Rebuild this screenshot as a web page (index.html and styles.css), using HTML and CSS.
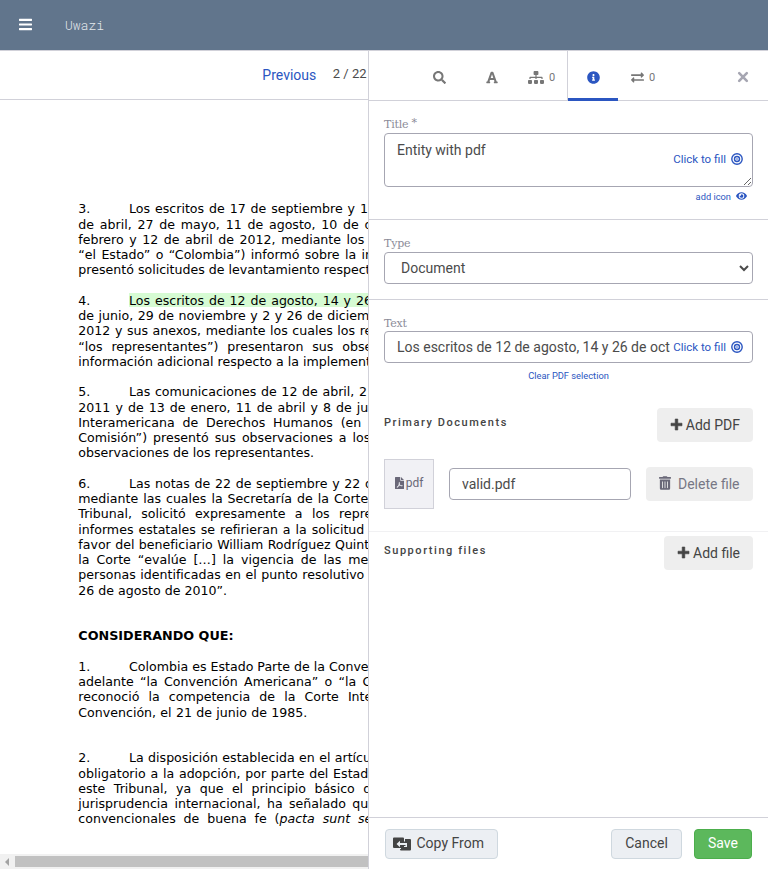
FILE: index.html
```
<!DOCTYPE html>
<html lang="es">
<head>
<meta charset="utf-8">
<title>Uwazi</title>
<link rel="stylesheet" href="styles.css">
</head>
<body>
<header class="topbar">
  <svg class="menu-icon" viewBox="0 0 448 512"><path d="M16 132h416c9 0 16-7 16-16V76c0-9-7-16-16-16H16C7 60 0 67 0 76v40c0 9 7 16 16 16zm0 160h416c9 0 16-7 16-16v-40c0-9-7-16-16-16H16c-9 0-16 7-16 16v40c0 9 7 16 16 16zm0 160h416c9 0 16-7 16-16v-40c0-9-7-16-16-16H16c-9 0-16 7-16 16v40c0 9 7 16 16 16z"/></svg>
  <span class="brand">Uwazi</span>
</header>
<div class="workspace">
  <main class="viewer">
    <div class="pager"><a class="previous">Previous</a><span class="count">2 / 22</span></div>
    <article class="page">
      <p><span class="num">3.</span><span class="fit" style="width:239px">Los escritos de 17 de septiembre y 1</span></p>
      <p><span class="fit" style="width:294px">de abril, 27 de mayo, 11 de agosto, 10 de o</span></p>
      <p><span class="fit" style="width:286px">febrero y 12 de abril de 2012, mediante los</span></p>
      <p><span class="fit" style="width:299px">“el Estado” o “Colombia”) informó sobre la im</span></p>
      <p><span class="fit" style="width:289px">presentó solicitudes de levantamiento respect</span></p>
      <p></p>
      <p><span class="num">4.</span><span class="fit marked" style="width:243px">Los escritos de 12 de agosto, 14 y 26</span></p>
      <p><span class="fit" style="width:291px">de junio, 29 de noviembre y 2 y 26 de diciem</span></p>
      <p><span class="fit" style="width:294px">2012 y sus anexos, mediante los cuales los re</span></p>
      <p><span class="fit" style="width:294px">“los representantes”) presentaron sus obse</span></p>
      <p><span class="fit" style="width:290px">información adicional respecto a la implement</span></p>
      <p></p>
      <p><span class="num">5.</span><span class="fit" style="width:238px">Las comunicaciones de 12 de abril, 2</span></p>
      <p><span class="fit" style="width:290px">2011 y de 13 de enero, 11 de abril y 8 de ju</span></p>
      <p><span class="fit" style="width:283px">Interamericana de Derechos Humanos (en</span></p>
      <p><span class="fit" style="width:292px">Comisión”) presentó sus observaciones a los</span></p>
      <p><span class="fit" style="width:234px">observaciones de los representantes.</span></p>
      <p></p>
      <p><span class="num">6.</span><span class="fit" style="width:244px">Las notas de 22 de septiembre y 22 d</span></p>
      <p><span class="fit" style="width:290px">mediante las cuales la Secretaría de la Corte</span></p>
      <p><span class="fit" style="width:294px">Tribunal, solicitó expresamente a los repre</span></p>
      <p><span class="fit" style="width:286px">informes estatales se refirieran a la solicitud</span></p>
      <p><span class="fit" style="width:291px">favor del beneficiario William Rodríguez Quint</span></p>
      <p><span class="fit" style="width:290px">la Corte “evalúe […] la vigencia de las me</span></p>
      <p><span class="fit" style="width:286px">personas identificadas en el punto resolutivo</span></p>
      <p><span class="fit" style="width:148px">26 de agosto de 2010”.</span></p>
      <p></p>
      <p></p>
      <p><b>CONSIDERANDO QUE:</b></p>
      <p></p>
      <p><span class="num">1.</span><span class="fit" style="width:239px">Colombia es Estado Parte de la Conve</span></p>
      <p><span class="fit" style="width:293px">adelante “la Convención Americana” o “la C</span></p>
      <p><span class="fit" style="width:294px">reconoció la competencia de la Corte Inte</span></p>
      <p><span class="fit" style="width:229px">Convención, el 21 de junio de 1985.</span></p>
      <p></p>
      <p></p>
      <p><span class="num">2.</span><span class="fit" style="width:242px">La disposición establecida en el artícu</span></p>
      <p><span class="fit" style="width:290px">obligatorio a la adopción, por parte del Estad</span></p>
      <p><span class="fit" style="width:293px">este Tribunal, ya que el principio básico d</span></p>
      <p><span class="fit" style="width:290px">jurisprudencia internacional, ha señalado qu</span></p>
      <p><span class="fit" style="width:294px">convencionales de buena fe (<i>pacta sunt se</i></span></p>
    </article>
    <div class="scrollbar"><span class="arrow"></span><span class="thumb"></span></div>
  </main>
  <aside class="panel">
    <nav class="tabs">
      <a class="tab t-search"><svg width="13" height="13" viewBox="0 0 512 512"><path d="M505 442.700 405.300 343c-4.500-4.500-10.600-7-17-7H372c27.600-35.300 44-79.700 44-128C416 93.100 322.900 0 208 0S0 93.100 0 208s93.100 208 208 208c48.300 0 92.700-16.400 128-44v16.300c0 6.400 2.500 12.500 7 17l99.700 99.700c9.400 9.400 24.600 9.400 33.900 0l28.300-28.300c9.400-9.400 9.400-24.600.1-34zM208 336c-70.700 0-128-57.200-128-128 0-70.700 57.200-128 128-128 70.700 0 128 57.200 128 128 0 70.700-57.200 128-128 128z"/></svg></a>
      <a class="tab t-font"><svg width="12" height="13" viewBox="0 0 448 512"><path d="M432 416h-23L278 52a32 32 0 0 0-30-20h-48a32 32 0 0 0-30 20L39 416H16a16 16 0 0 0-16 16v32a16 16 0 0 0 16 16h120a16 16 0 0 0 16-16v-32a16 16 0 0 0-16-16h-14l23-64h158l23 64h-14a16 16 0 0 0-16 16v32a16 16 0 0 0 16 16h120a16 16 0 0 0 16-16v-32a16 16 0 0 0-16-16zM174 272l50-140 50 140z"/></svg></a>
      <a class="tab t-tree"><svg width="16" height="13" viewBox="0 0 640 512"><path d="M128 352H32c-18 0-32 14-32 32v96c0 18 14 32 32 32h96c18 0 32-14 32-32v-96c0-18-14-32-32-32zm-24-80h192v48h48v-48h192v48h48v-58c0-21-17-38-38-38H344v-64h40c18 0 32-14 32-32V32c0-18-14-32-32-32H256c-18 0-32 14-32 32v96c0 18 14 32 32 32h40v64H94c-21 0-38 17-38 38v58h48zm264 80h-96c-18 0-32 14-32 32v96c0 18 14 32 32 32h96c18 0 32-14 32-32v-96c0-18-14-32-32-32zm240 0h-96c-18 0-32 14-32 32v96c0 18 14 32 32 32h96c18 0 32-14 32-32v-96c0-18-14-32-32-32z"/></svg><span>0</span></a>
      <a class="tab t-info"><svg width="13" height="13" viewBox="0 0 512 512"><path d="M256 8C119 8 8 119 8 256s111 248 248 248 248-111 248-248S393 8 256 8zm0 110c23.200 0 42 18.800 42 42s-18.800 42-42 42-42-18.800-42-42 18.800-42 42-42zm56 254c0 6.600-5.400 12-12 12h-88c-6.600 0-12-5.400-12-12v-24c0-6.600 5.400-12 12-12h12v-64h-12c-6.600 0-12-5.400-12-12v-24c0-6.600 5.400-12 12-12h64c6.600 0 12 5.400 12 12v100h12c6.600 0 12 5.400 12 12z"/></svg></a>
      <a class="tab t-links"><svg width="13" height="13" viewBox="0 0 512 512"><path d="M0 168v-16c0-13 11-24 24-24h360V80c0-21 26-32 41-17l80 80c9 9 9 25 0 34l-80 80c-15 15-41 4-41-17v-48H24c-13 0-24-11-24-24zm488 152H128v-48c0-21-26-32-41-17L7 335c-9 9-9 25 0 34l80 80c15 15 41 4 41-17v-48h360c13 0 24-11 24-24v-16c0-13-11-24-24-24z"/></svg><span>0</span></a>
      <a class="close"><svg width="12" height="12" viewBox="0 0 12 12"><path d="M2.200 2.200l7.600 7.600M9.800 2.200l-7.600 7.600" fill="none" stroke="currentColor" stroke-width="2.600" stroke-linecap="round"/></svg></a>
    </nav>
    <form class="form">
      <section class="group title-group">
        <label>Title <span class="star">*</span></label>
        <div class="control area">
          <textarea>Entity with pdf</textarea>
          <a class="fill">Click to fill <svg viewBox="0 0 12 12"><g fill="none" stroke="currentColor" stroke-width="1.400"><circle cx="6" cy="6" r="5.200"/><circle cx="6" cy="6" r="2.500"/></g><circle cx="6" cy="6" r=".8"/></svg></a>
        </div>
        <a class="add-icon">add icon <svg viewBox="0 0 576 512"><path d="M572 241C518 136 411 64 288 64S58 136 4 241a32 32 0 0 0 0 30c54 105 161 177 284 177s230-72 284-177a32 32 0 0 0 0-30zM288 400a144 144 0 1 1 0-288 144 144 0 0 1 0 288zm0-240a95 95 0 0 0-25 4 48 48 0 0 1-67 67 96 96 0 1 0 92-71z"/></svg></a>
      </section>
      <section class="group type-group">
        <label>Type</label>
        <select><option>Document</option></select>
      </section>
      <section class="group text-group">
        <label>Text</label>
        <div class="control line">
          <input type="text" value="Los escritos de 12 de agosto, 14 y 26 de oct">
          <a class="fill">Click to fill <svg viewBox="0 0 12 12"><g fill="none" stroke="currentColor" stroke-width="1.400"><circle cx="6" cy="6" r="5.200"/><circle cx="6" cy="6" r="2.500"/></g><circle cx="6" cy="6" r=".8"/></svg></a>
        </div>
        <a class="clear">Clear PDF selection</a>
      </section>
      <section class="files">
        <div class="files-head"><h2>Primary Documents</h2><button type="button" class="soft"><svg width="13" height="13" viewBox="0 0 13 13"><path d="M5.200 1h2.600v4.200H12v2.600H7.800V12H5.200V7.800H1V5.200h4.200z" stroke="currentColor" stroke-width=".6" stroke-linejoin="round"/></svg>Add PDF</button></div>
        <div class="file-row">
          <div class="thumb-box"><svg width="9" height="12" viewBox="0 0 384 512"><path fill-rule="evenodd" d="M224 136V0H24C11 0 0 11 0 24v464c0 13 11 24 24 24h336c13 0 24-11 24-24V160H248c-13 0-24-11-24-24zm32-136v128h128L256 0zM170 220h34c10 36 0 58-7 78 14 28 30 44 48 54 40-4 84 0 84 24 0 32-52 22-94-2l-78 22c-20 40-52 72-76 56-24-20 10-52 48-70 18-34 28-58 34-82-8-30-8-60 7-80zm12 124-12 26 38-10c-10-4-18-10-26-16z"/></svg><span>pdf</span></div>
          <input type="text" class="filename" value="valid.pdf">
          <button type="button" class="soft delete"><svg width="12" height="14" viewBox="0 0 448 512"><path fill-rule="evenodd" d="M32 464a48 48 0 0 0 48 48h288a48 48 0 0 0 48-48V128H32zM304 208a16 16 0 0 1 32 0v224a16 16 0 0 1-32 0zm-96 0a16 16 0 0 1 32 0v224a16 16 0 0 1-32 0zm-96 0a16 16 0 0 1 32 0v224a16 16 0 0 1-32 0zM432 32H312l-9-19A24 24 0 0 0 281 0H167a24 24 0 0 0-22 13l-9 19H16A16 16 0 0 0 0 48v32a16 16 0 0 0 16 16h416a16 16 0 0 0 16-16V48a16 16 0 0 0-16-16z"/></svg>Delete file</button>
        </div>
      </section>
      <section class="files supporting">
        <div class="files-head"><h2>Supporting files</h2><button type="button" class="soft"><svg width="13" height="13" viewBox="0 0 13 13"><path d="M5.200 1h2.600v4.200H12v2.600H7.800V12H5.200V7.800H1V5.200h4.200z" stroke="currentColor" stroke-width=".6" stroke-linejoin="round"/></svg>Add file</button></div>
      </section>
    </form>
    <footer class="actions">
      <button type="button" class="btn copy"><svg width="18" height="14" viewBox="0 0 18 14"><path d="M1 .5h9a1 1 0 0 1 1 1V2h6a1 1 0 0 1 1 1v9.500a1 1 0 0 1-1 1H8a1 1 0 0 1-1-1V11H1a1 1 0 0 1-1-1V1.500a1 1 0 0 1 1-1z"/><path d="M3.500 7 7 3.800V6h7v2H7v2.200zM11 2h1v2.500h-1zM7 11h1v1H7zM12.500 8H14v2h-3V9h1.500z" fill="#eceff3"/></svg>Copy From</button>
      <span class="spacer"></span>
      <button type="button" class="btn cancel">Cancel</button>
      <button type="button" class="btn save">Save</button>
    </footer>
  </aside>
</div>
</body>
</html>
```
FILE: styles.css
```
* { box-sizing: border-box; }
body { margin: 0; height: 869px; overflow: hidden; display: flex; flex-direction: column; font-family: Roboto, sans-serif; font-size: 14px; color: #4b4b4b; background: #fff; }
svg { fill: currentColor; flex: none; }
input, textarea, select, button { font: inherit; color: inherit; }
.topbar { height: 51px; flex: none; display: flex; align-items: center; padding: 0 0 1px 19px; background: #61758c; border-bottom: 1px solid #d1d1d9; color: #fff; }
.menu-icon { width: 13px; height: 15px; margin-top: -1px; }
.brand { margin-left: 33px; font-family: "Roboto Mono", "Liberation Mono", monospace; font-weight: 300; font-size: 13px; color: #e4e8ec; }
.workspace { flex: 1; min-height: 0; display: flex; }
.viewer { width: 368px; flex: none; overflow: hidden; display: flex; flex-direction: column; }
.pager { height: 49px; flex: none; display: flex; align-items: center; justify-content: flex-end; border-bottom: 1px solid #d1d1d9; padding-right: 1.500px; white-space: nowrap; }
.previous { color: #2b56c1; margin-right: 16.500px; }
.count { font-size: 13px; margin-top: -3px; }
.page { flex: 1; min-height: 0; overflow: hidden; padding: 101.300px 0 0 78.300px; font-family: "DejaVu Sans", sans-serif; font-size: 12.600px; line-height: 15.250px; color: #000; white-space: nowrap; }
.page p { margin: 0; height: 15.250px; display: flex; }
.page b { font-size: 12.750px; }
.num { width: 50.700px; flex: none; }
.fit { flex: none; text-align: justify; text-align-last: justify; white-space: normal; height: 15.250px; text-wrap: nowrap; }
.marked { background: #d6fbd3; height: 14px; }
.scrollbar { height: 15px; flex: none; display: flex; align-items: center; background: #f1f1f1; }
.arrow { margin: 0 6px 0 5px; border: 4px solid transparent; border-left: 0; border-right-color: #a3a3a3; }
.thumb { flex: 1; height: 11px; background: #c1c1c1; }
.panel { flex: 1; min-width: 0; display: flex; flex-direction: column; border-left: 1px solid #d1d1d9; }
.tabs { height: 50px; flex: none; display: flex; border-bottom: 1px solid #d1d1d9; color: #777; }
.tab { height: 50px; display: flex; align-items: center; padding-top: 3px; font-size: 11px; }
.tab span { margin-left: 5px; }
.t-search { margin-left: 64px; width: 53px; }
.t-font { width: 42px; }
.t-tree { width: 39px; }
.t-info { width: 51px; justify-content: center; color: #2b56c1; border-left: 1px solid #d1d1d9; padding-top: 3px; box-shadow: inset 0 -3px #2b56c1; clip-path: inset(0); }
.t-links { margin-left: 13px; flex: 1; }
.close { color: #a6a6b2; padding: 19px 19px 0 0; }
.form { flex: 1; min-height: 0; }
.group { padding: 0 15px; border-bottom: 1px solid #d1d1d9; }
.group label { display: block; height: 16px; font: 300 11px/15px "Roboto Slab", "DejaVu Serif", serif; letter-spacing: -.2px; color: #8c8c98; }
.title-group { height: 119px; padding-top: 15px; }
.title-group label { height: 17px; line-height: 17px; }
.star { position: relative; top: -2px; }
.control { display: flex; border: 1px solid #a6a6b2; border-radius: 4px; position: relative; }
.area { height: 54px; }
.control textarea, .control input { flex: 1; min-width: 0; border: 0; outline: 0; background: transparent; padding: 6px 12px; line-height: 20px; margin: 0; }
.control textarea { height: 52px; resize: vertical; }
.fill { display: flex; align-items: center; gap: 5px; font-size: 11.500px; color: #2b56c1; white-space: nowrap; }
.fill svg { width: 12px; height: 12px; }
.area .fill { position: absolute; right: 9px; top: 18px; }
.line { height: 32px; padding-right: 9px; }
.control.line input { padding: 0 0 0 12px; }
.add-icon { display: flex; align-items: center; justify-content: flex-end; gap: 5px; margin: 4px 6px 0 0; font-size: 9.300px; line-height: 12px; color: #2b56c1; }
.add-icon svg { width: 11px; height: 10px; margin-top: -2px; }
.type-group { height: 80px; padding-top: 16px; }
select { width: 100%; height: 32px; border: 1px solid #a6a6b2; border-radius: 4px; background: #fff; padding: 0 0 0 12px; }
.text-group { height: 108px; padding-top: 16px; border: 0; }
.text-group label { height: 15px; }
.clear { display: block; text-align: center; margin-top: 7px; font-size: 9.300px; line-height: 12px; color: #2b56c1; }
.files { padding: 0 15px; }
.files-head { height: 34px; display: flex; justify-content: space-between; }
h2 { margin: 8px 0 0; font-size: 11px; line-height: 13px; font-weight: 500; letter-spacing: 1.550px; color: #444; }
.soft { height: 34px; border: 0; border-radius: 4px; background: #eee; padding: 0 13px; display: flex; align-items: center; gap: 3px; white-space: nowrap; color: #444; }
.soft svg { margin-top: -2px; }
.file-row { height: 89px; display: flex; align-items: center; padding-bottom: 5px; }
.thumb-box { width: 50px; height: 50px; border: 1px solid #d1d1d9; background: #f1f1f5; display: flex; align-items: center; justify-content: center; gap: 2px; padding-bottom: 2px; font-size: 12px; color: #6a6878; }
.filename { width: 182px; height: 32px; border: 1px solid #a6a6b2; border-radius: 4px; padding: 0 12px; margin: 0 15px; }
.delete { gap: 7px; color: #777785; width: 107px; }
.delete svg { color: #6a6878; }
.supporting { border-top: 1px solid #f1f1f3; padding-top: 4px; }
.actions { height: 52px; flex: none; display: flex; align-items: center; border-top: 1px solid #d1d1d9; padding: 0 16px; }
.spacer { flex: 1; }
.btn { height: 30px; border: 1px solid #cfd8df; border-radius: 4px; background: #eceff3; padding: 0 13px 1px; color: #444; display: flex; align-items: center; justify-content: center; white-space: nowrap; }
.copy { width: 113px; padding: 0 7px 1px; gap: 5.500px; justify-content: flex-start; }
.copy svg { margin-top: 2px; }
.cancel { width: 71px; margin-right: 12px; }
.save { width: 58px; background: #5cb85c; border-color: #4cae4c; color: #fff; }
```
